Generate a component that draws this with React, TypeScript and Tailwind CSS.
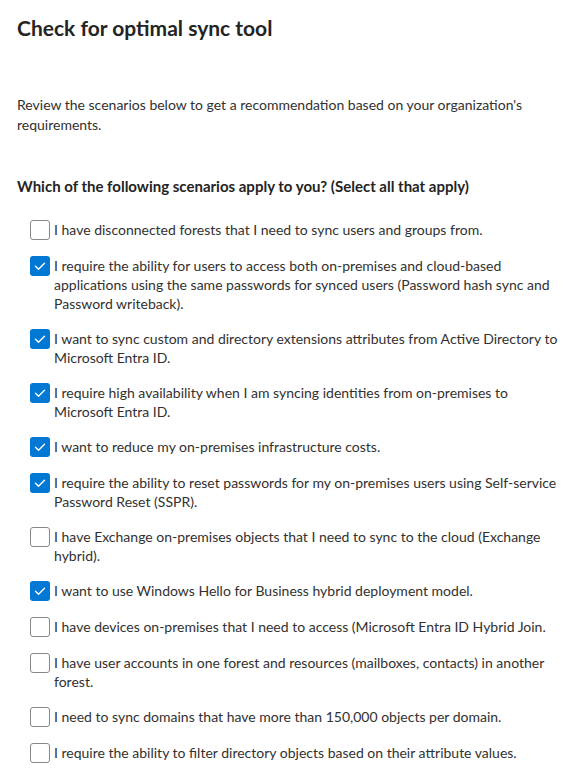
const scenarios = [
  { label: 'I have disconnected forests that I need to sync users and groups from.', checked: false },
  {
    label:
      'I require the ability for users to access both on-premises and cloud-based applications using the same passwords for synced users (Password hash sync and Password writeback).',
    checked: true,
  },
  {
    label: 'I want to sync custom and directory extensions attributes from Active Directory to Microsoft Entra ID.',
    checked: true,
  },
  { label: 'I require high availability when I am syncing identities from on-premises to Microsoft Entra ID.', checked: true },
  { label: 'I want to reduce my on-premises infrastructure costs.', checked: true },
  {
    label: 'I require the ability to reset passwords for my on-premises users using Self-service Password Reset (SSPR).',
    checked: true,
  },
  { label: 'I have Exchange on-premises objects that I need to sync to the cloud (Exchange hybrid).', checked: false },
  { label: 'I want to use Windows Hello for Business hybrid deployment model.', checked: true },
  { label: 'I have devices on-premises that I need to access (Microsoft Entra ID Hybrid Join.', checked: false },
  {
    label: 'I have user accounts in one forest and resources (mailboxes, contacts) in another forest.',
    checked: false,
  },
  { label: 'I need to sync domains that have more than 150,000 objects per domain.', checked: false },
  { label: 'I require the ability to filter directory objects based on their attribute values.', checked: false },
];

function Checkbox({ checked }: { checked: boolean }) {
  if (checked) {
    return (
      <span className="mr-1 flex h-5 w-5 shrink-0 items-center justify-center rounded-[3px] bg-[#0078d4]">
        <svg width="20" height="20" viewBox="0 0 20 20" fill="none">
          <path d="M5.5 10.3 L8.5 13.2 L14.5 7.2" stroke="white" strokeWidth="1.4" strokeLinecap="round" strokeLinejoin="round" />
        </svg>
      </span>
    );
  }
  return <span className="mr-1 h-5 w-5 shrink-0 rounded-[3px] border border-[#8a8886] bg-white" />;
}

export default function App() {
  return (
    <div className="min-h-screen bg-white pl-[17px] pr-[16px] pt-[14px] font-['Lato',sans-serif] text-[#323130]">
      <h1 className="text-[21px] font-bold leading-[28px] text-[#242424]">Check for optimal sync tool</h1>

      <p className="mt-[53px] text-[14px] leading-[20px]">
        Review the scenarios below to get a recommendation based on your organization's requirements.
      </p>

      <h2 className="mt-[41px] text-[15px] font-bold leading-[20px] text-[#242424]">
        Which of the following scenarios apply to you? (Select all that apply)
      </h2>

      <div className="mt-6 flex flex-col gap-4 pl-[13px]">
        {scenarios.map((item) => (
          <label key={item.label} className="flex items-start">
            <Checkbox checked={item.checked} />
            <span className="text-[14px] leading-[19px]">{item.label}</span>
          </label>
        ))}
      </div>
    </div>
  );
}
